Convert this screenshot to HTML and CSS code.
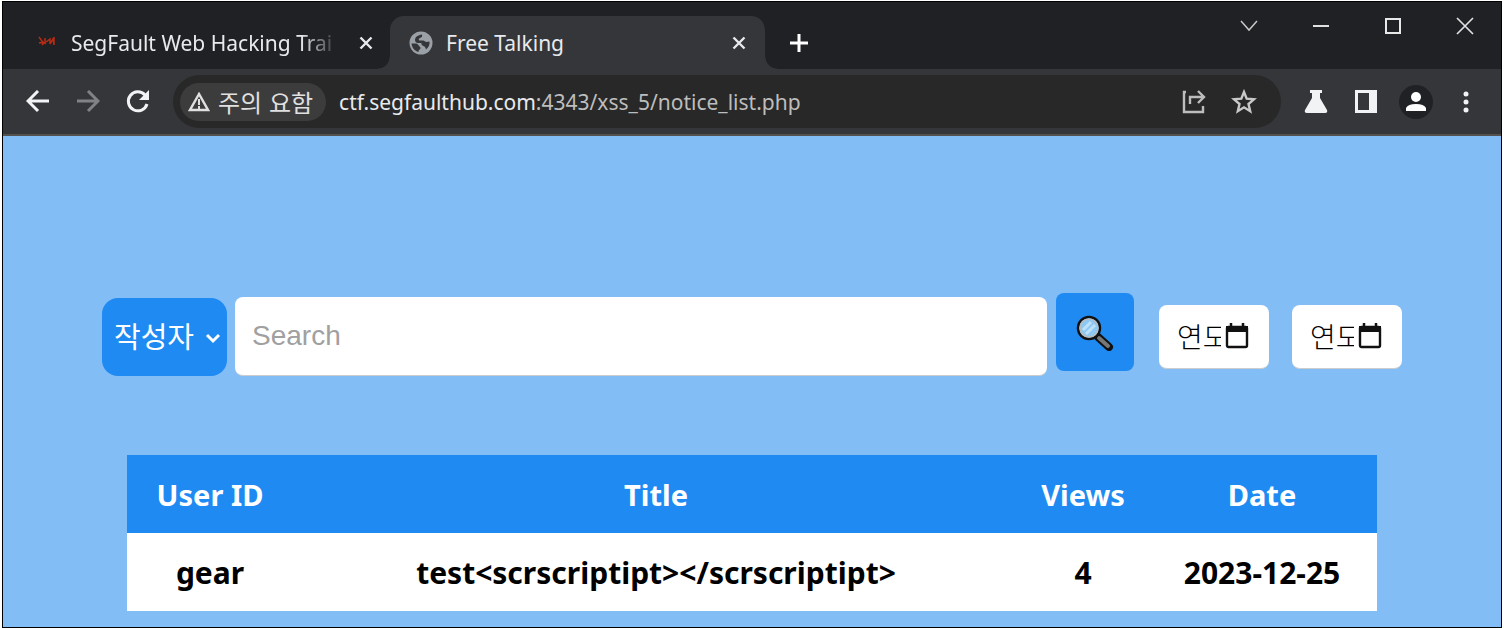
FILE: index.html
```html
<!DOCTYPE html>
<html lang="ko">
<head>
<meta charset="utf-8">
<title>Free Talking</title>
<link rel="stylesheet" href="styles.css">
</head>
<body>

<div class="window">

    <!-- tab strip -->
    <div class="tabs">
        <div class="tab">
            <svg class="favicon" width="22" height="22" viewBox="0 0 22 22">
                <path d="M3 5l3 4 1 3M3 11l4-1 3 2M9 6v6M10 10l4-3v5M14 12l3-5 1 6M18 5v8M6 13l2-2" fill="none" stroke="#b52c16" stroke-width="1.500"/>
            </svg>
            <span class="tab-title fade">SegFault Web Hacking Trai</span>
            <button class="tab-close" aria-label="Close tab">
                <svg width="14" height="14" viewBox="0 0 14 14"><path d="M1.500 1.500l11 11M12.500 1.500l-11 11" stroke="#e8eaed" stroke-width="2.400"/></svg>
            </button>
        </div>
        <div class="tab active">
            <svg class="favicon" width="24" height="24" viewBox="0 0 24 24">
                <circle cx="12" cy="12" r="11.500" fill="#9aa0a6"/>
                <path d="M13 3.500c1 2-.5 3-2 3.500s-1.500 2-.5 2.500h3.500c1.500 0 2 1.500 3.500 1.500l3-.5c.5 3-1 6-3.500 8-.5-2-1-3-2.500-3.500s-2.500-1.500-2-3H9c-2 0-3-1.500-3-3 0-3 3-5 7-5.500z" fill="#35363a"/>
                <path d="M2.500 12.500H7c1.500 0 2.500 1.500 3 2.500s1.500.5 1.500 2-2 1.500-2 4C5.500 20 3 16.500 2.500 12.500z" fill="#35363a"/>
                <path d="M13 4l5 3-1 2-3-1z" fill="#9aa0a6"/>
            </svg>
            <span class="tab-title">Free Talking</span>
            <button class="tab-close" aria-label="Close tab">
                <svg width="14" height="14" viewBox="0 0 14 14"><path d="M1.500 1.500l11 11M12.500 1.500l-11 11" stroke="#e8eaed" stroke-width="2.400"/></svg>
            </button>
        </div>
        <button class="new-tab" aria-label="New tab">
            <svg width="20" height="20" viewBox="0 0 20 20"><path d="M10 1v18M1 10h18" stroke="#fff" stroke-width="3"/></svg>
        </button>
        <div class="window-buttons">
            <button aria-label="Search tabs">
                <svg width="18" height="18" viewBox="0 0 18 18"><path d="M1 4l8 9 8-9" fill="none" stroke="#c8c8c8" stroke-width="1.500"/></svg>
            </button>
            <button aria-label="Minimize">
                <svg width="18" height="18" viewBox="0 0 18 18"><path d="M1 9h16" stroke="#e0e0e0" stroke-width="2"/></svg>
            </button>
            <button aria-label="Maximize">
                <svg width="18" height="18" viewBox="0 0 18 18"><rect x="2" y="2" width="14" height="14" fill="none" stroke="#e8e8e8" stroke-width="2"/></svg>
            </button>
            <button aria-label="Close">
                <svg width="18" height="18" viewBox="0 0 18 18"><path d="M1 1l16 16M17 1L1 17" stroke="#e0e0e0" stroke-width="1.700"/></svg>
            </button>
        </div>
    </div>

    <!-- toolbar -->
    <div class="toolbar">
        <button class="nav" aria-label="Back">
            <svg width="24" height="24" viewBox="0 0 24 24"><path d="M23 11H3M12 1L2 11l10 10" fill="none" stroke="#f1f3f4" stroke-width="3"/></svg>
        </button>
        <button class="nav" aria-label="Forward">
            <svg width="24" height="24" viewBox="0 0 24 24"><path d="M1 11h20M12 1l10 10-10 10" fill="none" stroke="#808286" stroke-width="3"/></svg>
        </button>
        <button class="nav" aria-label="Reload">
            <svg width="24" height="24" viewBox="0 0 24 24"><path d="M19 5A9.500 9.500 0 1 0 21 14" fill="none" stroke="#f1f3f4" stroke-width="3"/><path d="M23 0v10H13z" fill="#f1f3f4"/></svg>
        </button>
        <div class="address">
            <button class="warning">
                <svg width="22" height="20" viewBox="0 0 22 20"><path d="M11 2L2 18h18z" fill="none" stroke="#e0e0e0" stroke-width="2.400"/><path d="M11 7v6M11 14v3" stroke="#e0e0e0" stroke-width="2"/></svg>
                주의 요함
            </button>
            <a class="url" href="#">ctf.segfaulthub.com<span>:4343/xss_5/notice_list.php</span></a>
            <button class="address-icon" aria-label="Share">
                <svg width="24" height="24" viewBox="0 0 24 24"><path d="M4 2H2v20h19v-6M8 14V7h13M16 1l6 6-6 6" fill="none" stroke="#bdbdbd" stroke-width="2.400"/></svg>
            </button>
            <button class="address-icon" aria-label="Bookmark">
                <svg width="26" height="26" viewBox="0 0 26 26"><path d="M13 3l2.700 6.700 7.300.6-5.500 4.700 1.700 7.200-6.200-3.900-6.200 3.900L8.500 15 3 10.300l7.300-.6z" fill="none" stroke="#c8c8c8" stroke-width="2.400"/></svg>
            </button>
        </div>
        <div class="extras">
            <button aria-label="Labs">
                <svg width="24" height="24" viewBox="0 0 24 24"><path d="M6 0h12v3h-2v5l7 12q1 3-2 3H3q-3 0-2-3L8 8V3H6z" fill="#f1f3f4"/></svg>
            </button>
            <button aria-label="Side panel">
                <svg width="24" height="24" viewBox="0 0 24 24"><path d="M1 0h22v23H1zM4 3v17h11V3z" fill="#f1f3f4" fill-rule="evenodd"/></svg>
            </button>
            <button class="profile" aria-label="Profile">
                <svg width="20" height="20" viewBox="0 0 20 20"><circle cx="10" cy="5" r="5" fill="#fff"/><path d="M0 19v-3q2-4 10-4t10 4v3z" fill="#fff"/></svg>
            </button>
            <button aria-label="Menu">
                <svg width="6" height="22" viewBox="0 0 6 22"><circle cx="3" cy="3" r="2.500" fill="#f1f3f4"/><circle cx="3" cy="11" r="2.500" fill="#f1f3f4"/><circle cx="3" cy="19" r="2.500" fill="#f1f3f4"/></svg>
            </button>
        </div>
    </div>

    <!-- page -->
    <main>
        <form class="search-form">
            <div class="select-box">
                <select aria-label="검색 조건">
                    <option>작성자</option>
                    <option>제목</option>
                </select>
                <svg class="arrow" width="16" height="12" viewBox="0 0 16 12"><path d="M2 3l6 6 6-6" fill="none" stroke="#fff" stroke-width="3"/></svg>
            </div>
            <input class="search-text" type="text" placeholder="Search" aria-label="Search">
            <button class="search-btn" type="button" aria-label="검색">
                <svg width="38" height="38" viewBox="0 0 38 38">
                    <path d="M22 24l11 10" stroke="#111" stroke-width="8" stroke-linecap="round"/>
                    <path d="M23 25l9 8" stroke="#777" stroke-width="4" stroke-linecap="round"/>
                    <circle cx="13" cy="15" r="11" fill="#8cc8f4" stroke="#111" stroke-width="2.500"/>
                    <circle cx="13" cy="15" r="9" fill="none" stroke="#b8bcc0" stroke-width="1.500"/>
                    <path d="M7 17l8-8M10 21l9-9" stroke="#bfe0f9" stroke-width="3"/>
                </svg>
            </button>
            <div class="date-box">
                <input type="text" value="연도-월-일" aria-label="시작일">
                <svg width="24" height="26" viewBox="0 0 24 26"><rect x="2" y="4" width="20" height="20" rx="1.500" fill="none" stroke="#111" stroke-width="2.400"/><path d="M6 0v4M18 0v4" stroke="#111" stroke-width="2.500"/><path d="M1 3h22v6H1z" fill="#111"/></svg>
            </div>
            <div class="date-box">
                <input type="text" value="연도-월-일" aria-label="종료일">
                <svg width="24" height="26" viewBox="0 0 24 26"><rect x="2" y="4" width="20" height="20" rx="1.500" fill="none" stroke="#111" stroke-width="2.400"/><path d="M6 0v4M18 0v4" stroke="#111" stroke-width="2.500"/><path d="M1 3h22v6H1z" fill="#111"/></svg>
            </div>
        </form>

        <table>
            <thead>
                <tr>
                    <th class="col-user">User ID</th>
                    <th>Title</th>
                    <th class="col-views">Views</th>
                    <th class="col-date">Date</th>
                </tr>
            </thead>
            <tbody>
                <tr>
                    <td>gear</td>
                    <td>test&lt;scrscriptipt&gt;&lt;/scrscriptipt&gt;</td>
                    <td>4</td>
                    <td>2023-12-25</td>
                </tr>
            </tbody>
        </table>
    </main>

</div>

</body>
</html>
```
FILE: styles.css
```css
* {
    box-sizing: border-box;
}

body {
    margin: 0;
    padding: 1px 2px;
    background-color: white;
    font-family: "Noto Sans", "Noto Sans CJK KR", sans-serif;
}

button {
    display: flex;
    align-items: center;
    justify-content: center;
    padding: 0;
    border: none;
    background: none;
    cursor: pointer;
}

svg {
    flex-shrink: 0;
}

.window {
    display: flex;
    flex-direction: column;
    min-height: calc(100vh - 2px);
    border: 1px solid black;
    background-color: #83bdf6;
}

/* tab strip */
.tabs {
    display: flex;
    align-items: flex-end;
    height: 67px;
    background-color: #202124;
}

.tab {
    position: relative;
    display: flex;
    align-items: center;
    width: 375px;
    height: 53px;
    padding: 0 19px;
    color: #e8eaed;
    font-size: 21px;
}

.tab:first-child {
    width: 387px;
    padding-left: 33px;
    padding-right: 17px;
}

.tab.active {
    border-radius: 14px 14px 0 0;
    background-color: #35363a;
}

/* flared feet of the active tab */
.tab.active::before,
.tab.active::after {
    content: "";
    position: absolute;
    bottom: 0;
    width: 12px;
    height: 12px;
}

.tab.active::before {
    left: -12px;
    background: radial-gradient(circle at 0 0, #202124 11px, #35363a 12px);
}

.tab.active::after {
    right: -12px;
    background: radial-gradient(circle at 100% 0, #202124 11px, #35363a 12px);
}

.tab-title {
    flex: 1;
    margin-left: 13px;
    margin-right: 8px;
    white-space: nowrap;
}

.fade {
    -webkit-mask-image: linear-gradient(to left, transparent 12px, black 50px);
    mask-image: linear-gradient(to left, transparent 12px, black 50px);
}

.new-tab {
    width: 68px;
    height: 53px;
}

.window-buttons {
    display: flex;
    align-self: flex-start;
    margin-left: auto;
}

.window-buttons button {
    width: 72px;
    height: 48px;
}

/* toolbar */
.toolbar {
    display: flex;
    align-items: center;
    height: 67px;
    padding: 0 10px;
    border-bottom: 2px solid #55514f;
    background-color: #35363a;
}

.nav {
    width: 50px;
    height: 50px;
}

.address {
    display: flex;
    flex: 1;
    align-items: center;
    height: 53px;
    margin-left: 10px;
    padding: 0 12px 0 7px;
    border-radius: 27px;
    background-color: #282828;
}

.warning {
    gap: 8px;
    height: 38px;
    padding: 0 13px 0 8px;
    border-radius: 19px;
    background-color: #3c3c3c;
    color: #e0e0e0;
    font-family: "Noto Sans CJK KR", sans-serif;
    font-size: 24px;
    line-height: 32px;
}

.url {
    flex: 1;
    margin-left: 13px;
    color: #e8eaed;
    font-size: 21px;
    text-decoration: none;
}

.url span {
    color: #bdbdbd;
}

.address-icon {
    width: 50px;
    height: 50px;
}

.extras {
    display: flex;
    align-items: center;
    margin-left: 10px;
}

.extras button {
    width: 50px;
    height: 50px;
}

.extras .profile {
    width: 34px;
    height: 34px;
    margin: 0 8px;
    border-radius: 50%;
    background-color: #202124;
}

/* page */
main {
    flex: 1;
    padding: 156px 99px 16px;
}

.search-form {
    display: flex;
    align-items: center;
    height: 89px;
}

.select-box {
    position: relative;
    margin-right: 8px;
}

.select-box select {
    display: block;
    width: 125px;
    height: 78px;
    padding: 0 12px 4px;
    border: none;
    border-radius: 16px;
    background-color: #1e8af2;
    color: white;
    font-family: "Noto Sans CJK KR", sans-serif;
    font-size: 29px;
    appearance: none;
}

.arrow {
    position: absolute;
    top: 34px;
    right: 6px;
    pointer-events: none;
}

.search-text {
    flex: 1;
    min-width: 0;
    height: 79px;
    padding: 0 17px;
    border: none;
    border-radius: 8px;
    border-bottom: 1px solid #ccc;
    font-family: "Liberation Sans", sans-serif;
    font-size: 28px;
}

.search-text::placeholder {
    color: #a0a0a0;
}

.search-btn {
    width: 78px;
    height: 78px;
    margin: 0 2px 10px 9px;
    border-radius: 8px;
    background-color: #1e8af2;
}

.date-box {
    display: flex;
    align-items: center;
    gap: 4px;
    width: 110px;
    height: 64px;
    margin-left: 23px;
    padding: 0 20px 0 18px;
    border-radius: 8px;
    border-bottom: 1px solid #ccc;
    background-color: white;
}

.date-box input {
    flex: 1;
    min-width: 0;
    padding: 0;
    border: none;
    outline: none;
    font-family: "Noto Sans CJK KR", sans-serif;
    font-size: 28px;
    font-weight: 300;
}

table {
    width: calc(100% - 50px);
    margin: 74px auto 0;
    border-collapse: collapse;
    table-layout: fixed;
    background-color: white;
    text-align: center;
    font-size: 30px;
    font-weight: bold;
    line-height: 40px;
}

th, td {
    height: 78px;
    padding: 2px 0 0;
}

th {
    background-color: #1e8af2;
    color: white;
    font-size: 29px;
}

.col-user {
    width: 166px;
}

.col-views {
    width: 128px;
}

.col-date {
    width: 230px;
}
```
